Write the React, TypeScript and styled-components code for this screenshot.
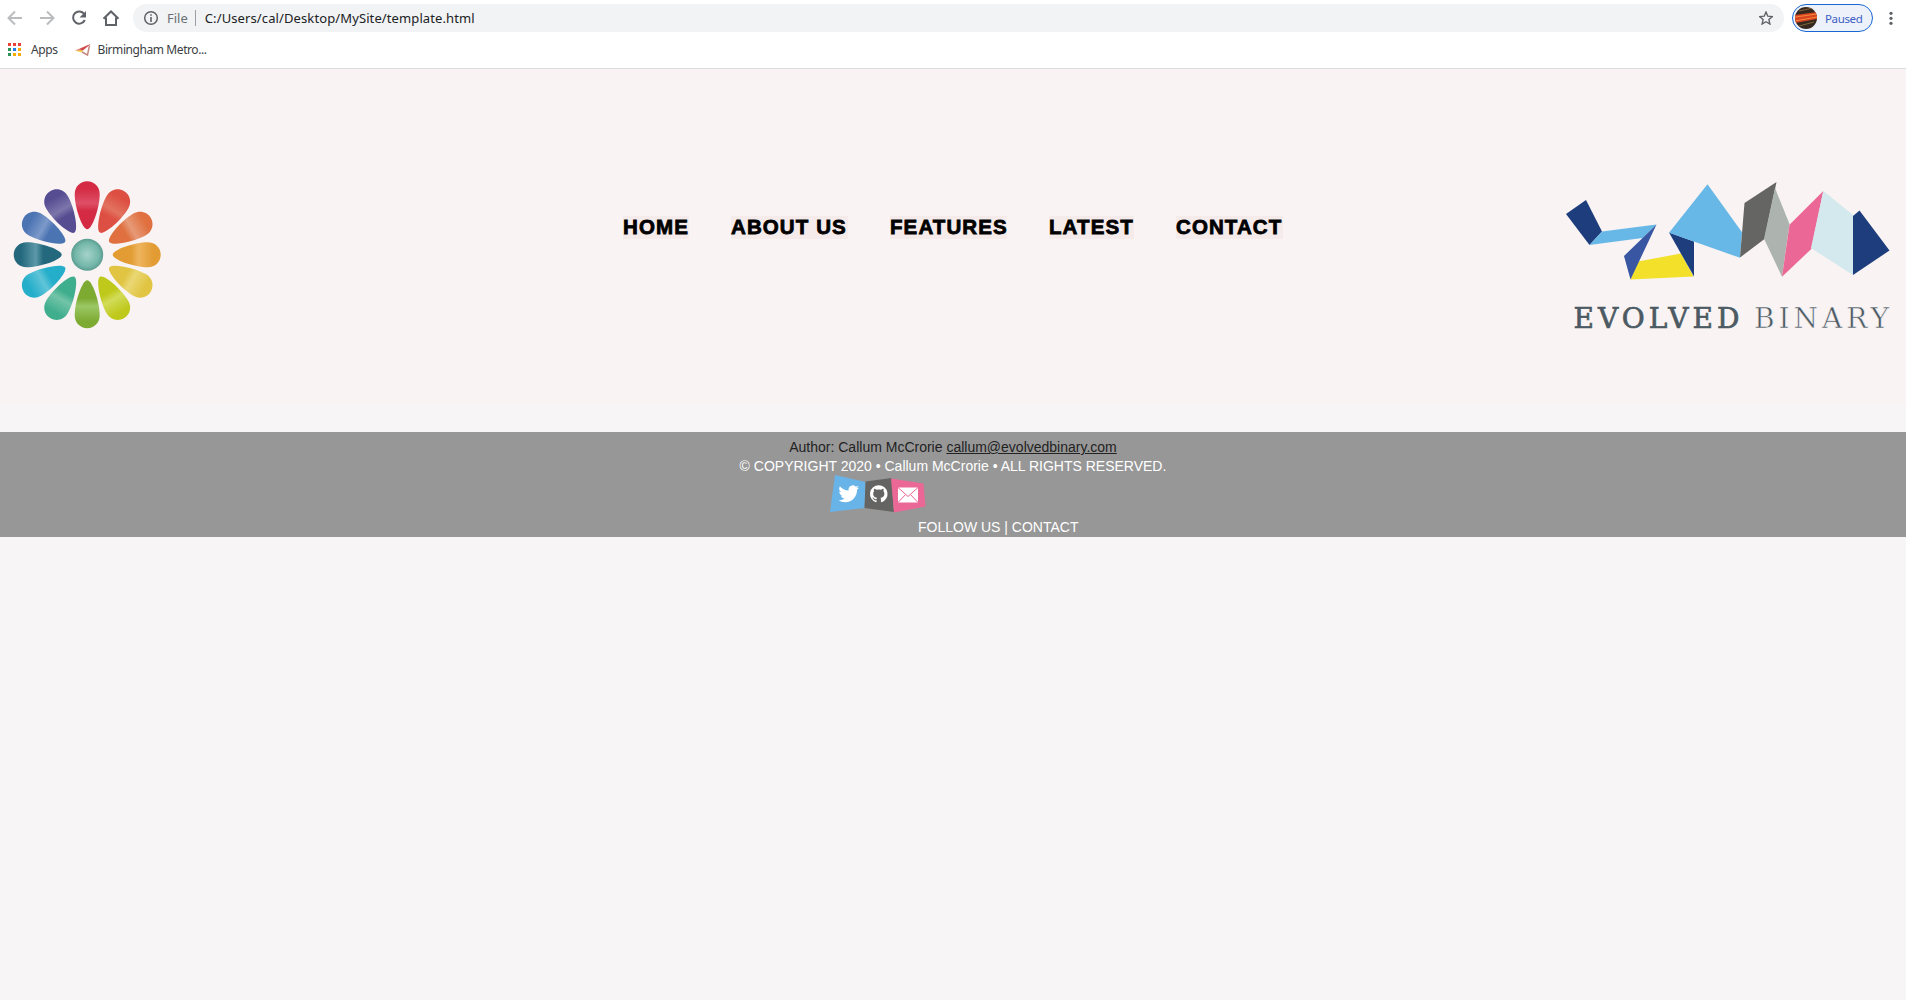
import React from "react";
import styled, { createGlobalStyle } from "styled-components";

const Global = createGlobalStyle`
  * { box-sizing: border-box; }
  body { margin: 0; background: #f7f5f6; font-family: "Liberation Sans", Arial, sans-serif; }
`;

const Chrome = styled.div`
  height: 69px;
  background: #fff;
  border-bottom: 1px solid #dadce0;
  font-family: "Noto Sans", "Open Sans", sans-serif;
`;
const Toolbar = styled.div`
  display: flex;
  height: 36px;
  padding: 0 10px 0 6px;
  align-items: center;
`;
const NavButtons = styled.div`
  display: flex;
  gap: 14px;
  margin-right: 13px;
  svg { display: block; width: 18px; height: 18px; }
`;
const Address = styled.div`
  display: flex;
  align-items: center;
  flex: 1;
  height: 28px;
  padding: 0 11px 0 10px;
  border-radius: 14px;
  background: #f1f3f4;
  font-size: 13px;
  color: #202124;
  svg { display: block; flex: none; }
`;
const Scheme = styled.span`
  margin-left: 8px;
  padding-right: 7px;
  border-right: 1px solid #9aa0a6;
  line-height: 16px;
  color: #6b7075;
`;
const Url = styled.span`
  margin: 0 auto 0 9px;
  letter-spacing: 0.11px;
  white-space: nowrap;
`;
const Profile = styled.div`
  display: flex;
  align-items: center;
  width: 81px;
  height: 28px;
  margin: 0 13px 0 8px;
  padding-left: 2px;
  gap: 8px;
  border: 1px solid #1967d2;
  border-radius: 14px;
  background: #edf1fa;
  color: #3c5fc4;
  font-size: 11.5px;
  letter-spacing: -0.35px;
`;
const Bookmarks = styled.div`
  display: flex;
  align-items: center;
  height: 27px;
  padding-left: 8px;
  font-size: 12px;
  color: #3c4043;
  letter-spacing: -0.42px;
`;
const Bookmark = styled.div<{ $gap: number; $after?: number }>`
  display: flex;
  align-items: center;
  gap: ${(p) => p.$gap}px;
  margin-right: ${(p) => p.$after ?? 0}px;
  white-space: nowrap;
`;
const Header = styled.header`
  display: flex;
  justify-content: space-between;
  align-items: flex-start;
  height: 334px;
  background: #f9f3f3;
`;
const FlowerBox = styled.div`
  width: 350px;
  padding: 108px 0 0 8px;
  svg { display: block; }
`;
const BrandBox = styled.div`
  width: 350px;
  padding-top: 108px;
  svg { display: block; }
`;
const Menu = styled.nav`
  display: flex;
  gap: 42px;
  padding-top: 147px;
`;
const MenuLink = styled.a<{ $width: number }>`
  width: ${(p) => p.$width}px;
  height: 23px;
  background: #f6ebeb;
  color: #000;
  font-size: 20.5px;
  line-height: 21px;
  font-weight: 900;
  letter-spacing: 1.1px;
  -webkit-text-stroke: 0.8px #000;
  white-space: nowrap;
`;
const Footer = styled.footer`
  display: flex;
  flex-direction: column;
  align-items: center;
  height: 105px;
  margin-top: 29px;
  padding-top: 6px;
  background: #979797;
  color: #fff;
  font-size: 14px;
  line-height: 19px;
`;
const Line = styled.div<{ $dark?: boolean }>`
  height: 19px;
  color: ${(p) => (p.$dark ? "#222" : "#fff")};
  white-space: nowrap;
  a { color: inherit; text-decoration: underline; }
`;
const Social = styled.div`
  display: flex;
  width: 246px;
  height: 46px;
  margin-top: -4px;
  svg { display: block; }
`;
const FollowLine = styled(Line)`
  width: 161px;
  margin-left: 91px;
`;

const petals = [
  ["#d42a43", "#dd4f66"], ["#dd4f42", "#e2735f"], ["#e0703f", "#e69a78"], ["#e29c33", "#eeb45d"],
  ["#e0c442", "#ead875"], ["#bfc91c", "#d2dc58"], ["#7dab32", "#9cc766"], ["#3fae8d", "#73c4a8"],
  ["#25aeca", "#60c4d8"], ["#23687d", "#5c98a8"], ["#4b74b3", "#7c99c9"], ["#554c91", "#7c76ab"],
];

const Flower = () => (
  <svg width="160" height="160" viewBox="8 177 160 160">
    <defs>
      {petals.map(([base, light], i) => (
        <linearGradient key={i} id={`petal${i}`} x1="0" y1="0" x2="0" y2="1">
          <stop offset="0" stopColor={base} />
          <stop offset="0.15" stopColor={base} />
          <stop offset="0.46" stopColor={light} />
          <stop offset="0.62" stopColor={base} />
          <stop offset="1" stopColor={base} />
        </linearGradient>
      ))}
      <radialGradient id="core">
        <stop offset="0" stopColor="#a5d3c9" />
        <stop offset="0.75" stopColor="#74b7aa" />
        <stop offset="1" stopColor="#5b9e91" />
      </radialGradient>
    </defs>
    {petals.map((_, i) => (
      <path
        key={i}
        transform={`translate(87.200 254.700) rotate(${i * 30})`}
        fill={`url(#petal${i})`}
        d="M0-25.500C-5-25.500-12.500-47-12.500-60.500C-12.500-68-7-73.500 0-73.500S12.500-68 12.500-60.500C12.500-47 5-25.500 0-25.500Z"
      />
    ))}
    <circle cx="87.200" cy="254.700" r="16" fill="url(#core)" />
  </svg>
);

const Brand = () => (
  <svg width="350" height="160" viewBox="1556 177 350 160">
    <path fill="#1d3d7c" d="M1566 214l20-14 16 31.500-12.500 13.500z" />
    <path fill="#68b8e7" d="M1602 231.500l54.500-7-14 13.500-53 7z" />
    <path fill="#f2e02b" d="M1638 261.500l43-8 12.500 23-63 3z" />
    <path fill="#3856a2" d="M1656.500 224.500l-26 55-6.500-23.500z" />
    <path fill="#1d3d7c" d="M1669 232.500l25 9v35z" />
    <path fill="#68b8e7" d="M1707.500 184.300l34.500 48-2 25.500-71-25z" />
    <path fill="#656563" d="M1744.500 203l32-21-12 57-24.500 18.500z" />
    <path fill="#adb4b0" d="M1775 188l14.500 36-7.500 52.700-18-38z" />
    <path fill="#eb6795" d="M1823.300 191l-12 58-29.300 27.700 7.500-52z" />
    <path fill="#d3e9ee" d="M1823.300 191l29.700 24v60l-42-27z" />
    <path fill="#1d3d7c" d="M1853 216l6.500-5.500 30 40-36.500 24.500z" />
    <g fontFamily='"DejaVu Serif", serif' fill="#4b5a63" fontSize="28">
      <text x="1573.500" y="328" stroke="#4b5a63" strokeWidth="0.700" textLength="166">EVOLVED</text>
      <text x="1754" y="328" stroke="#f9f3f3" strokeWidth="0.600" textLength="135">BINARY</text>
    </g>
  </svg>
);

const SocialIcons = () => (
  <svg width="100" height="42" viewBox="830.500 471.500 100 42">
    <path fill="#68b4e8" d="M835.500 474.500l30.500 7-1 26-34.500 4z" />
    <path fill="#646462" d="M866 481l26-3.500 2.500 34-29.500-4z" />
    <path fill="#eb6795" d="M891.500 478l32.500 5 2 23-31.500 6z" />
    <path fill="#fff" transform="translate(839 483) scale(.86)" d="M23.950 4.570a10 10 0 01-2.820.77 4.960 4.960 0 002.160-2.720c-.95.550-2 .96-3.130 1.180a4.920 4.920 0 00-8.380 4.480C7.690 8.100 4.070 6.130 1.640 3.160a4.920 4.920 0 001.520 6.570 4.900 4.900 0 01-2.230-.61v.06a4.920 4.920 0 003.950 4.830 5 5 0 01-2.210.08 4.940 4.940 0 004.600 3.420A9.870 9.870 0 010 19.540a13.990 13.990 0 007.550 2.210c9.050 0 14-7.500 14-13.980 0-.21 0-.42-.02-.63a9.940 9.940 0 002.460-2.550z" />
    <path fill="#fff" transform="translate(870.500 484.500) scale(.73)" d="M12 .3a12 12 0 00-3.790 23.390c.6.110.820-.26.820-.58v-2.230c-3.340.72-4.040-1.410-4.040-1.410-.55-1.390-1.330-1.760-1.330-1.760-1.090-.74.080-.73.080-.73 1.200.08 1.840 1.240 1.840 1.240 1.070 1.830 2.810 1.300 3.490 1 .11-.78.420-1.310.76-1.610-2.670-.3-5.470-1.330-5.470-5.930 0-1.310.47-2.380 1.240-3.220-.14-.3-.54-1.520.1-3.180 0 0 1.010-.32 3.300 1.230a11.500 11.500 0 016.010 0c2.280-1.550 3.290-1.230 3.290-1.230.64 1.660.24 2.880.12 3.180a4.650 4.650 0 011.230 3.220c0 4.610-2.810 5.620-5.480 5.920.42.360.81 1.100.81 2.220v3.290c0 .32.190.690.800.580A12 12 0 0012 .3z" />
    <path fill="#fff" d="M898.500 487h20v15h-20z" />
    <path fill="none" stroke="#eb6795" strokeWidth="1" d="M898.500 487l10 9 10-9M898.500 502l7.500-8M918.500 502l-7.500-8" />
  </svg>
);

const Arrow = ({ flip }: { flip?: boolean }) => (
  <svg viewBox="0 0 18 18" fill="none" stroke="#babcbe" strokeWidth="2">
    <path d={flip ? "M2 9h13M9 2.500l6.500 6.500-6.500 6.500" : "M16 9H3M9 2.500L2.500 9 9 15.500"} />
  </svg>
);

const appColors = ["#ea4335", "#ea4335", "#ea4335", "#289457", "#1a80e8", "#f9ab00", "#289457", "#f9ab00", "#f9ab00"];

export default function App() {
  return (
    <>
      <Global />
      <Chrome>
        <Toolbar>
          <NavButtons>
            <Arrow />
            <Arrow flip />
            <svg viewBox="0 0 18 18">
              <path d="M14.200 5A6.100 6.100 0 1 0 14.800 11" fill="none" stroke="#5f6368" strokeWidth="2" />
              <path d="M16 2v6.500H9.500z" fill="#5f6368" />
            </svg>
            <svg viewBox="0 0 18 18">
              <path d="M1.500 9.800L9 2.500l7.500 7.300M4 8.500V16h10V8.500" fill="none" stroke="#5f6368" strokeWidth="2" />
            </svg>
          </NavButtons>
          <Address>
            <svg width="16" height="16" viewBox="0 0 16 16">
              <circle cx="8" cy="8" r="6.300" fill="none" stroke="#5f6368" strokeWidth="1.500" />
              <path d="M8 7v5M8 4.200v1.600" stroke="#5f6368" strokeWidth="1.600" />
            </svg>
            <Scheme>File</Scheme>
            <Url>C:/Users/cal/Desktop/MySite/template.html</Url>
            <svg width="14" height="14" viewBox="0 0 14 14">
              <path d="M7 1l1.800 4.200 4.500.4-3.400 3 1 4.400L7 10.700 3.100 13l1-4.400-3.400-3 4.500-.4z" fill="none" stroke="#5f6368" strokeWidth="1.400" />
            </svg>
          </Address>
          <Profile>
            <svg width="22" height="22" viewBox="0 0 22 22">
              <defs><clipPath id="avatar"><circle cx="11" cy="11" r="11" /></clipPath></defs>
              <g clipPath="url(#avatar)">
                <path fill="#35291f" d="M0 0h22v22H0z" />
                <path fill="#d84320" d="M0 8L22 5v7L0 16z" />
                <path stroke="#f28b3c" d="M0 10l22-3M0 14l22-4" />
                <path stroke="#80643d" d="M4 4l14-3M4 19l15-4" />
              </g>
            </svg>
            Paused
          </Profile>
          <svg width="10" height="18" viewBox="0 0 10 18" fill="#5f6368">
            <circle cx="5" cy="4.300" r="1.600" /><circle cx="5" cy="9.300" r="1.600" /><circle cx="5" cy="14.300" r="1.600" />
          </svg>
        </Toolbar>
        <Bookmarks>
          <Bookmark $gap={10} $after={17}>
            <svg width="13" height="13" viewBox="0 0 13 13">
              {appColors.map((c, i) => <rect key={i} x={(i % 3) * 5} y={Math.floor(i / 3) * 5} width="3" height="3" fill={c} />)}
            </svg>
            Apps
          </Bookmark>
          <Bookmark $gap={7}>
            <svg width="16" height="14" viewBox="0 0 16 14">
              <path d="M15.500 1L0 7.500l6.500 1.200z" fill="#e0827c" />
              <path d="M15.500 1L5 5.800l2 2.200z" fill="#cf4a4d" />
              <path d="M0 7.500l8-.2-1.500 2.200z" fill="#f5d44c" />
              <path d="M14.500 2.500L12.500 12 7 9" fill="none" stroke="#c98a80" strokeWidth="1.500" />
            </svg>
            Birmingham Metro...
          </Bookmark>
        </Bookmarks>
      </Chrome>
      <Header>
        <FlowerBox><Flower /></FlowerBox>
        <Menu>
          <MenuLink $width={66}>HOME</MenuLink>
          <MenuLink $width={117}>ABOUT US</MenuLink>
          <MenuLink $width={117}>FEATURES</MenuLink>
          <MenuLink $width={85}>LATEST</MenuLink>
          <MenuLink $width={107}>CONTACT</MenuLink>
        </Menu>
        <BrandBox><Brand /></BrandBox>
      </Header>
      <Footer>
        <Line $dark>Author: Callum McCrorie <a>callum@evolvedbinary.com</a></Line>
        <Line>© COPYRIGHT 2020 • Callum McCrorie • ALL RIGHTS RESERVED.</Line>
        <Social><SocialIcons /></Social>
        <FollowLine>FOLLOW US | CONTACT</FollowLine>
      </Footer>
    </>
  );
}
